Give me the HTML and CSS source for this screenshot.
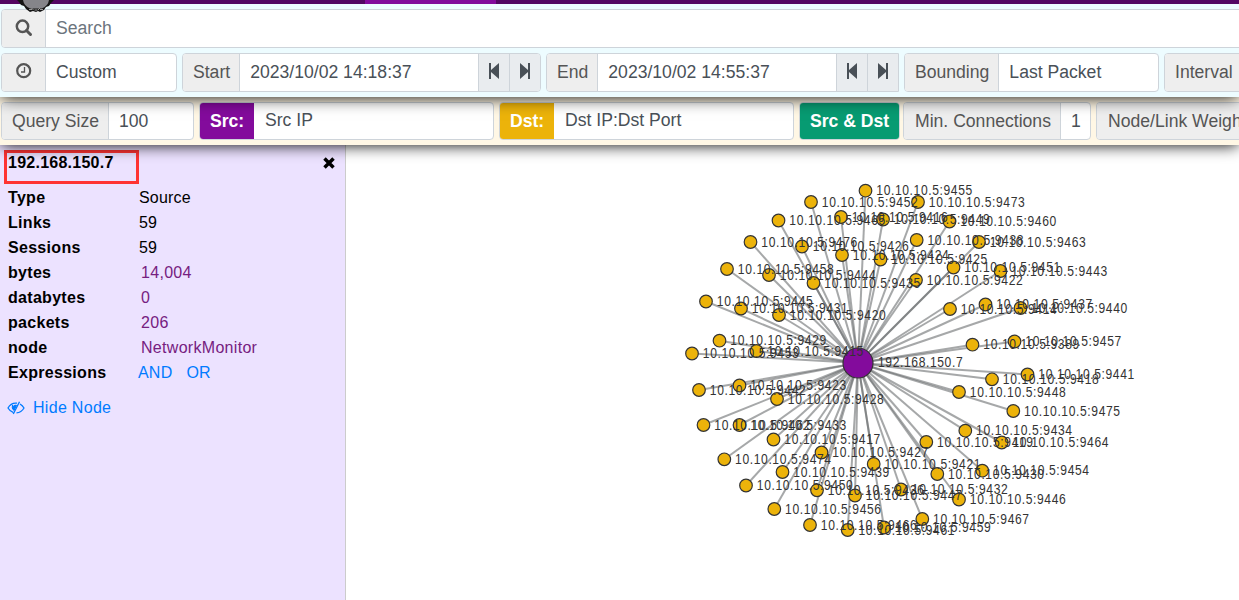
FILE: index.html
```html
<!DOCTYPE html>
<html lang="en">
<head>
<meta charset="utf-8">
<title>Connections</title>
<link rel="stylesheet" href="styles.css">
</head>
<body>
<div class="app">
  <header class="navbar">
    <span class="nav-active"></span>
    <svg class="owl" width="38" height="12" viewBox="0 0 38 12"><path d="M0 0h37l-3 3-2 3-3 1-2 3-4 2-2-1-2 1-3-1-3 1-4-3-2-3-3-1-2-3z" fill="#151515"/><path d="M6 0h26q-1 6-7 8.500H13Q7 6 6 0z" fill="#85858a"/><path d="M12 9.500h3M17.500 10h3M23 9.500h3M14.500 8l2 2M23 8l-2 2" stroke="#999" stroke-width="1"/></svg>
  </header>
  <section class="search-area">
    <div class="group search">
      <span class="addon icon-addon"><svg width="18" height="18" viewBox="0 0 18 18" fill="none" stroke="#555"><circle cx="7.500" cy="7.300" r="5.700" stroke-width="2.500"/><path d="M11.500 11.500L15.500 15.500" stroke-width="3" stroke-linecap="round"/></svg></span>
      <span class="field placeholder">Search</span>
    </div>
    <div class="row">
      <div class="group g-custom">
        <span class="addon icon-addon"><svg width="18" height="18" viewBox="0 0 18 18" fill="none" stroke="#555"><circle cx="8.700" cy="7.700" r="6.500" stroke-width="2.200"/><path d="M9.500 4v5H6" stroke-width="1.300"/></svg></span>
        <span class="field">Custom</span>
      </div>
      <div class="group g-start">
        <span class="addon">Start</span>
        <span class="field">2023/10/02 14:18:37</span>
        <span class="step"><svg width="12" height="16" viewBox="0 0 12 16"><path d="M1 0h2v7L11 0v16L3 9v7H1z"/></svg></span>
        <span class="step"><svg width="12" height="16" viewBox="0 0 12 16"><path d="M11 0H9v7L1 0v16l8-7v7h2z"/></svg></span>
      </div>
      <div class="group g-end">
        <span class="addon">End</span>
        <span class="field">2023/10/02 14:55:37</span>
        <span class="step"><svg width="12" height="16" viewBox="0 0 12 16"><path d="M1 0h2v7L11 0v16L3 9v7H1z"/></svg></span>
        <span class="step"><svg width="12" height="16" viewBox="0 0 12 16"><path d="M11 0H9v7L1 0v16l8-7v7h2z"/></svg></span>
      </div>
      <div class="group g-bounding">
        <span class="addon">Bounding</span>
        <span class="field">Last Packet</span>
      </div>
      <div class="group g-interval">
        <span class="addon">Interval</span>
        <span class="field"></span>
      </div>
    </div>
  </section>
  <section class="options">
    <div class="group g-size"><span class="addon">Query Size</span><span class="field">100</span></div>
    <div class="group g-src"><span class="tag src">Src:</span><span class="field raised">Src IP</span></div>
    <div class="group g-dst"><span class="tag dst">Dst:</span><span class="field raised">Dst IP:Dst Port</span></div>
    <div class="group g-both"><span class="tag both">Src &amp; Dst</span></div>
    <div class="group g-min"><span class="addon">Min. Connections</span><span class="field">1</span></div>
    <div class="group g-weight"><span class="addon">Node/Link Weight</span></div>
  </section>
  <main class="content">
    <aside class="details">
      <div class="title"><strong>192.168.150.7</strong><span class="highlight"></span>
        <svg class="close" width="12" height="12" viewBox="0 0 12 12"><path d="M1.500 1.500l9 9M10.500 1.500l-9 9" stroke="#000" stroke-width="3.500"/></svg>
      </div>
      <dl>
        <dt>Type</dt><dd>Source</dd>
        <dt>Links</dt><dd>59</dd>
        <dt>Sessions</dt><dd>59</dd>
        <dt>bytes</dt><dd class="value">14,004</dd>
        <dt>databytes</dt><dd class="value">0</dd>
        <dt>packets</dt><dd class="value">206</dd>
        <dt>node</dt><dd class="value">NetworkMonitor</dd>
        <dt>Expressions</dt><dd class="links"><a>AND</a><a>OR</a></dd>
      </dl>
      <a class="hide"><svg width="18" height="14" viewBox="0 0 18 14" fill="none" stroke="#007bff"><path d="M10 2.200Q4 1.500 1 7q2 3.500 5.500 4.700M13 3q2.500 1.500 4 4-2.700 4.600-7.500 4.900" stroke-width="1.300"/><path d="M5.500 4Q4.200 7.500 7 9.500L9.500 4.300Q7.500 3.500 6.500 5.500z" fill="#007bff" stroke-width="1"/><path d="M12.500.8L6.300 13" stroke-width="1.300"/></svg>Hide Node</a>
    </aside>
    <svg class="graph" id="graph" width="893" height="455" viewBox="346 145 893 455"></svg>
  </main>
</div>
<script src="graph.js"></script>
</body>
</html>
```
FILE: styles.css
```css
* { box-sizing: border-box; }
body { margin: 0; font-family: "Liberation Sans", Arial, sans-serif; color: #000; background: #fff; }
.app { width: 1239px; height: 600px; overflow: hidden; display: flex; flex-direction: column; }
.navbar { height: 4px; background: #530763; padding-left: 365px; position: relative; z-index: 5; flex: none; }
.nav-active { display: block; width: 131px; height: 4px; background: #830b9c; }
.owl { position: absolute; left: 17px; top: 0; }
.search-area { height: 93px; flex: none; background: #edfcff; padding: 5px 0 0 1px; position: relative; z-index: 4; box-shadow: 0 1px 16px -1px #000; }
.row { display: flex; gap: 5px; margin-top: 5px; }
.group { display: flex; height: 39px; flex: none; font-size: 17.6px; color: #495057; white-space: nowrap; border: 1px solid #ced4da; border-radius: 4px; overflow: hidden; background: #fff; line-height: 36px; }
.search { width: 1260px; }
.addon { background: #eee; color: #555; border-right: 1px solid #ced4da; padding: 0 9px 0 10px; flex: none; }
.icon-addon { width: 44px; padding: 9px 0 0 13px; line-height: 0; }
.field { flex: 1; padding-left: 10px; }
.placeholder { color: #6c757d; }
.step { width: 31px; background: #e9ecef; border-left: 1px solid #ced4da; padding: 9px 0 0 9px; line-height: 0; fill: #495057; }
.g-custom { width: 176px; }
.g-start { width: 359px; }
.g-end { width: 353px; border-radius: 4px 0 0 4px; }
.g-bounding { width: 255px; }
.g-interval { width: 160px; }
.options { height: 48px; flex: none; background: #fff7e5; padding: 5px 0 0 1px; display: flex; gap: 5px; position: relative; z-index: 3; box-shadow: 0 1px 16px -1px #000; }
.options .group { height: 38px; border-color: #ced4da; }
.options .raised { line-height: 34px; padding-left: 11px; }
.g-size { width: 193px; }
.g-src, .g-dst { width: 295px; }
.g-both { width: 101px; margin-right: -2px; }
.g-min { width: 188px; }
.g-min .addon { padding-left: 11px; }
.g-weight { width: 180px; }
.g-weight .addon { padding-left: 11px; }
.tag { color: #fff; font-weight: bold; padding: 0 10px; flex: none; }
.src { background: #830b9c; width: 54px; }
.dst { background: #ecb30a; width: 54px; }
.both { background: #079b72; width: 100%; }
.content { display: flex; height: 455px; }
.details { width: 346px; flex: none; background: #ece2ff; border-right: 1px solid #ccc; padding: 5px 8px; font-size: 16px; line-height: 25px; letter-spacing: .3px; }
.title { position: relative; display: flex; justify-content: space-between; height: 35px; padding-right: 1px; }
.title strong { line-height: 25px; letter-spacing: .25px; }
.highlight { position: absolute; left: -4px; top: 0; width: 135px; height: 34px; border: 3px solid #ff3333; }
.close { margin-top: 7px; margin-right: 1px; }
dl { display: grid; grid-template-columns: 131px 1fr; margin: 0; }
dt { font-weight: bold; }
dd { margin: 0; letter-spacing: .2px; }
.value { color: #76207f; padding-left: 2px; letter-spacing: .3px; }
.links { display: flex; gap: 14px; margin-left: -1px; }
a { color: #007bff; }
.hide { display: flex; align-items: center; gap: 8px; margin: 10px 0 0 -1px; }
.graph { display: block; flex: none; }
.link { stroke: #6b6e70; stroke-opacity: .6; stroke-width: 2; }
.node { fill: #ecb30a; stroke: #333; stroke-width: 1.2; }
.root { fill: #830b9c; }
.label { font-size: 14px; letter-spacing: .7px; fill: #333; }
```
FILE: graph.js
```js
const root = { x: 858, y: 363, r: 15, label: "192.168.150.7" };
const peers = [
  [865.5,190.7,9455],[811,202,9452],[918,202,9473],[778.5,220.5,9465],[841,217,9416],
  [883,219.5,9449],[949.5,221.5,9460],[750.5,242,9476],[802,246.5,9426],[842,255,9424],
  [916.7,240,9438],[979,242,9463],[880.5,259.5,9425],[727,269,9458],[769,275,9444],
  [953.5,267.5,9451],[1000.5,271,9443],[813.5,283,9435],[916,280,9422],[706,301.5,9445],
  [741,308.5,9431],[779,315,9420],[950,309,9414],[985.5,304.5,9437],[1020.5,308,9440],
  [719.5,340.7,9429],[756.5,351,9415],[692,353.5,9453],[972.5,344.7,9389],[1014.5,341.5,9457],
  [699,390,9442],[739.5,385.5,9423],[777,399,9428],[1027.5,374.5,9441],[992,379.3,9418],
  [959,392,9448],[1013.3,411,9475],[703.5,425,9462],[739.5,425,9433],[773.5,439.5,9417],
  [965.3,430.7,9434],[926.3,442,9419],[1001.7,442.5,9464],[724.3,459.3,9474],[821.5,452.5,9427],
  [873.7,464,9421],[782.5,472,9439],[937.3,474,9430],[982.3,470.7,9454],[746,485.5,9450],
  [817,490.3,9436],[855,495.5,9447],[901,489.5,9432],[959,499.5,9446],[774.3,509,9456],
  [922.3,519,9467],[810,525,9466],[847.7,530,9461],[884,527.5,9459]
];
const svg = document.getElementById("graph");
function add(tag, attrs, text) {
  const el = document.createElementNS("http://www.w3.org/2000/svg", tag);
  for (const key in attrs) el.setAttribute(key, attrs[key]);
  if (text) el.textContent = text;
  svg.appendChild(el);
}
function label(x, y, text) {
  add("text", { class: "label", transform: `translate(${x} ${y}) scale(.865 1)` }, text);
}
peers.forEach(([x, y]) => add("line", { class: "link", x1: root.x, y1: root.y, x2: x, y2: y }));
peers.forEach(([x, y]) => add("circle", { class: "node", cx: x, cy: y, r: 6.3 }));
add("circle", { class: "node root", cx: root.x, cy: root.y, r: root.r });
peers.forEach(([x, y, port]) => label(x + 10.8, y + 4.5, "10.10.10.5:" + port));
label(root.x + 20, root.y + 4.3, root.label);
```
